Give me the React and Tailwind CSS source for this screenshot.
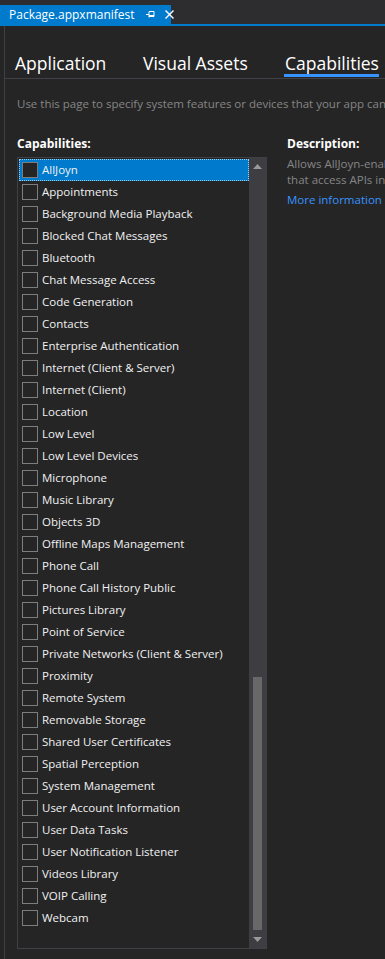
import { useState } from "react";

const capabilities = [
  "AllJoyn",
  "Appointments",
  "Background Media Playback",
  "Blocked Chat Messages",
  "Bluetooth",
  "Chat Message Access",
  "Code Generation",
  "Contacts",
  "Enterprise Authentication",
  "Internet (Client & Server)",
  "Internet (Client)",
  "Location",
  "Low Level",
  "Low Level Devices",
  "Microphone",
  "Music Library",
  "Objects 3D",
  "Offline Maps Management",
  "Phone Call",
  "Phone Call History Public",
  "Pictures Library",
  "Point of Service",
  "Private Networks (Client & Server)",
  "Proximity",
  "Remote System",
  "Removable Storage",
  "Shared User Certificates",
  "Spatial Perception",
  "System Management",
  "User Account Information",
  "User Data Tasks",
  "User Notification Listener",
  "Videos Library",
  "VOIP Calling",
  "Webcam",
];

const PinIcon = () => (
  <svg width="10" height="9" viewBox="0 0 10 9" className="text-white">
    <path d="M0 4.5h3M3 1.5v6M3 1.5h5v5H3M3 5.5h5" stroke="currentColor" strokeWidth="1" fill="none" />
  </svg>
);

const CloseIcon = () => (
  <svg width="9" height="9" viewBox="0 0 9 9">
    <path d="M0.5 0.5l8 8M8.5 0.5l-8 8" stroke="#ffffff" strokeWidth="1.4" />
  </svg>
);

const Row = ({ label, selected, onClick }) => (
  <div
    onClick={onClick}
    className={
      "flex items-center h-[22px] pl-[3px] cursor-default " +
      (selected ? "bg-[#007acc] outline outline-1 outline-dotted outline-[#9fcdf0] -outline-offset-1" : "")
    }
  >
    <div className="w-[16px] h-[16px] border border-[#7d7d7d] bg-[#252526] shrink-0" />
    <span className="ml-[4px] text-[11.5px] text-[#f1f1f1] whitespace-nowrap">{label}</span>
  </div>
);

const App = () => {
  const [selected, setSelected] = useState(0);

  return (
    <div className="w-[385px] h-[959px] overflow-hidden bg-[#252526] flex flex-col font-['Open_Sans',sans-serif]">
      {/* document tab strip */}
      <div className="h-[24px] bg-[#2d2d30] pt-[5px] flex shrink-0">
        <div className="w-[171px] h-[19px] bg-[#007acc] flex items-center pl-[9px]">
          <span className="text-[12px] text-white leading-none">Package.appxmanifest</span>
          <span className="ml-[11px] flex items-center"><PinIcon /></span>
          <span className="ml-[9px] flex items-center"><CloseIcon /></span>
        </div>
      </div>
      <div className="h-[2px] bg-[#007acc] shrink-0" />

      <div className="flex-1 ml-[4px] border-l border-[#3f3f46] flex flex-col min-h-0">
        {/* designer tabs */}
        <div className="h-[53px] border-b border-[#3f3f46] flex items-end shrink-0 pl-[10px] text-[17.5px] text-white">
          <div className="w-[128px] pb-[6px] leading-none">Application</div>
          <div className="w-[142px] pb-[6px] leading-none">Visual Assets</div>
          <div className="leading-none">
            <div className="pb-[2px] whitespace-nowrap">Capabilities</div>
            <div className="h-[3px] bg-[#3794ff] -ml-px mb-[1px]" />
          </div>
        </div>

        <div className="pl-[12px] pt-[17px] text-[11.5px] text-[#858585] whitespace-nowrap leading-[16px]">
          Use this page to specify system features or devices that your app can use.
        </div>

        <div className="flex pl-[12px] pt-[24px] flex-1 min-h-0 pb-[10px]">
          <div className="w-[250px] flex flex-col shrink-0">
            <div className="text-[12px] font-bold text-white leading-[16px] mb-[5px]">Capabilities:</div>
            <div className="flex-1 border border-[#3f3f46] flex min-h-0">
              <div className="flex-1 pt-px pl-px min-w-0">
                {capabilities.map((c, i) => (
                  <Row key={c} label={c} selected={i === selected} onClick={() => setSelected(i)} />
                ))}
              </div>
              <div className="w-[17px] bg-[#3e3e42] flex flex-col shrink-0">
                <div className="h-[17px] flex items-center justify-center">
                  <svg width="9" height="5" viewBox="0 0 9 5">
                    <path d="M4.5 0L9 5H0z" fill="#999999" />
                  </svg>
                </div>
                <div className="flex-1 flex flex-col justify-end items-center pb-px">
                  <div className="w-[9px] h-[253px] bg-[#686868] mr-px" />
                </div>
                <div className="h-[17px] flex items-center justify-center">
                  <svg width="9" height="5" viewBox="0 0 9 5">
                    <path d="M0 0h9L4.5 5z" fill="#999999" />
                  </svg>
                </div>
              </div>
            </div>
          </div>

          <div className="ml-[20px] flex flex-col whitespace-nowrap">
            <div className="text-[12px] font-bold text-white leading-[16px] mb-[4px]">Description:</div>
            <div className="text-[11.5px] text-[#858585] leading-[16px]">Allows AllJoyn-enabled apps to discover and interact</div>
            <div className="text-[11.5px] text-[#858585] leading-[16px]">that access APIs in the AllJoyn namespace.</div>
            <div className="text-[11.5px] text-[#3794ff] leading-[16px] mt-[4px]">More information</div>
          </div>
        </div>
      </div>
    </div>
  );
};

export default App;
